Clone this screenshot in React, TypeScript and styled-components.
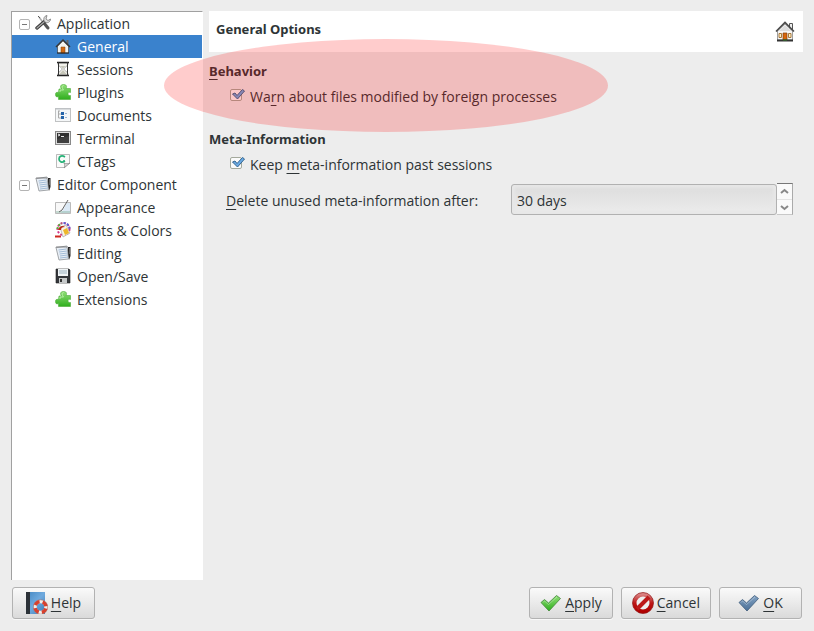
import React, { useState } from "react";
import styled, { createGlobalStyle } from "styled-components";

const GlobalStyle = createGlobalStyle`
  * { box-sizing: border-box; }
  body {
    margin: 0;
    background: #ededed;
    color: #2e3436;
    font-family: "Open Sans", "Noto Sans", sans-serif;
    font-size: 14px;
    line-height: 20px;
  }
  button, input { font: inherit; color: inherit; }
`;

const Dialog = styled.main`
  position: relative;
  display: flex;
  flex-direction: column;
  gap: 7px;
  min-height: 100vh;
  padding: 11px 11px 12px;
`;

const Content = styled.div`
  flex: 1;
  display: flex;
  gap: 6px;
`;

const Tree = styled.nav`
  flex: 0 0 192px;
  background: #fff;
  border: 1px solid #a0a0a0;
  border-right: 1px solid #fff;
  border-bottom: 0;
`;

const TreeRow = styled.button<{ $child?: boolean; $selected?: boolean }>`
  display: flex;
  align-items: center;
  width: 100%;
  height: 23px;
  padding: 1px 0 0 ${(p) => (p.$child ? 43 : 7)}px;
  border: 0;
  text-align: left;
  white-space: nowrap;
  background: ${(p) => (p.$selected ? "#3a82cd" : "transparent")};
  color: ${(p) => (p.$selected ? "#fff" : "#2e3436")};
`;

const Expander = styled.span`
  display: grid;
  place-items: center;
  width: 11px;
  height: 11px;
  margin-right: 5px;
  border: 1px solid #b4b4b4;
  border-radius: 2px;
  &::after {
    content: "";
    width: 5px;
    height: 1px;
    background: #777;
  }
`;

const TreeIcon = styled.svg`
  flex: none;
  width: 16px;
  height: 16px;
  margin-right: 6px;
  margin-bottom: 2px;
`;

const Page = styled.section`
  flex: 1;
  min-width: 0;
`;

const PageHeader = styled.header`
  display: flex;
  align-items: center;
  justify-content: space-between;
  height: 41px;
  padding: 0 7px;
  background: #fff;
`;

const Title = styled.h1`
  margin: 0;
  padding-bottom: 6px;
  font-family: "Noto Sans", "Open Sans", sans-serif;
  font-size: 13px;
  font-weight: 700;
`;

const HeaderIcon = styled.svg`
  width: 22px;
  height: 22px;
`;

const Group = styled.section`
  padding-top: 9px;
  & + & { padding-top: 22px; }
`;

const GroupTitle = styled.h2`
  margin: 0 0 6px;
  font-family: "Noto Sans", "Open Sans", sans-serif;
  font-size: 13px;
  font-weight: 700;
`;

const Option = styled.label`
  display: flex;
  align-items: center;
  gap: 4px;
  padding-left: 21px;
`;

const CheckBox = styled.span`
  display: grid;
  width: 16px;
  height: 14px;
  margin-bottom: 4px;
  & > * { grid-area: 1 / 1; }
`;

const CheckInput = styled.input`
  appearance: none;
  width: 12px;
  height: 12px;
  margin: 1px 0 0;
  border: 1px solid #a4a99c;
  border-radius: 2px;
  background: #fafafa;
  &:not(:checked) + svg { visibility: hidden; }
`;

const Tick = styled.svg`
  z-index: 1;
  width: 16px;
  height: 14px;
  pointer-events: none;
`;

const Field = styled.div`
  display: grid;
  grid-template-columns: 285px 1fr;
  align-items: center;
  padding: 8px 10px 0 17px;
`;

const FieldLabel = styled.label`
  padding-top: 3px;
`;

const Spin = styled.div`
  display: flex;
  height: 32px;
`;

const SpinInput = styled.input`
  flex: 1;
  min-width: 0;
  height: 31px;
  margin-top: 1px;
  padding: 1px 5px 0;
  border: 1px solid #b1b1b1;
  border-radius: 3px;
  background: linear-gradient(#dcdcdc, #ececec);
  box-shadow: inset 0 0 3px 3px #e7e7e7;
  outline: 0;
`;

const SpinButtons = styled.div`
  display: grid;
  grid-template-rows: 1fr 1fr;
  width: 16px;
  background: #fafafa;
  border-top: 1px solid #777;
  border-right: 1px solid #aaa;
  border-bottom: 1px solid #c8c8c8;
`;

const SpinButton = styled.button`
  display: grid;
  place-items: center;
  padding: 0;
  border: 0;
  background: transparent;
  & + & { border-top: 1px solid #e4e4e4; }
`;

const Arrow = styled.svg`
  width: 9px;
  height: 7px;
`;

const Footer = styled.footer`
  display: flex;
  gap: 8px;
  padding: 0 1px;
`;

const Push = styled.button<{ $first?: boolean }>`
  display: flex;
  align-items: center;
  justify-content: center;
  gap: 3px;
  min-width: 83px;
  height: 32px;
  padding: 0 10px;
  margin-right: ${(p) => (p.$first ? "auto" : "0")};
  border: 1px solid #b2b2b2;
  border-radius: 3px;
  background: linear-gradient(#fafafa, #dadada);
  box-shadow: 0 1px 0 #f8f8f8;
`;

const PushIcon = styled.svg`
  flex: none;
  width: 22px;
  height: 22px;
`;

const Mnemonic = styled.span`
  text-decoration: underline;
  text-decoration-thickness: 1px;
  text-decoration-skip-ink: none;
  text-underline-offset: 3px;
`;

const Highlight = styled.div`
  position: absolute;
  left: 164px;
  top: 39px;
  width: 444px;
  height: 93px;
  border-radius: 50%;
  background: rgba(255, 0, 0, 0.2);
  pointer-events: none;
  z-index: 2;
`;

const drawings: Record<string, React.ReactNode> = {
  tools: (
    <>
      <path d="M4 2 12 13" stroke="#aaa" strokeWidth="1.5" />
      <path d="M3 1 5 3" stroke="#555" />
      <path d="M9 8 13 13" stroke="#555" strokeWidth="3" strokeLinecap="round" />
      <path d="M2 13 10 6" stroke="#3a3a3a" strokeWidth="3.4" strokeLinecap="round" />
      <path d="M2 13 9 7" stroke="#aaa" strokeWidth="1.2" strokeLinecap="round" />
      <path d="M12 .5C9 1 8 4 9.500 6.500 12 9 15.500 7 15.500 4L13 5.500 11 4z" fill="#ddd" stroke="#777" strokeWidth=".8" />
    </>
  ),
  home: (
    <>
      <path d="M11.500 2h2v4h-2z" fill="#666" />
      <path d="M2.500 8 8 2.500l5.500 5.500v7h-11z" fill="#f4f4f0" stroke="#333" strokeWidth=".6" />
      <path d="M1 9 8 2 15 9" fill="none" stroke="#373737" strokeWidth="1.500" />
      <path d="M6 9h4v6H6z" fill="#d16a15" stroke="#82400b" strokeWidth=".5" />
      <path d="M2 15h12" stroke="#222" />
    </>
  ),
  hourglass: (
    <>
      <path d="M3 2h10c0 4-4 4-4 6s4 2 4 6H3c0-4 4-4 4-6S3 6 3 2z" fill="#f1f1eb" stroke="#888" strokeWidth=".7" />
      <path d="M2 1.500h12M2 14.500h12" stroke="#222" strokeWidth="1.400" />
      <path d="M3.500 1v14M12.500 1v14" stroke="#333" />
      <path d="M5.500 5h5L8 7.500zM8 9l3.500 4h-7z" fill="#c5c5b8" />
    </>
  ),
  puzzle: (
    <>
      <path
        d="M4 5H6.500C4.500 2 6 .5 8.500 .5S12.500 2 11 4.500H15.500V8.500C14 8 13 8.500 13 10S14 11.500 15.500 11.500V15.500H3.500V12.500C1.500 13.500 .5 12.500 .5 10.500S1.500 8 3.500 8.500z"
        fill="url(#green)"
        stroke="#4bab38"
        strokeWidth=".6"
      />
      <path d="M5 8V6h3.500C7 4 6.500 2 8.500 1.500" stroke="#c7f5b6" strokeWidth=".8" />
    </>
  ),
  documents: (
    <>
      <rect x=".5" y="1.5" width="15" height="13" fill="#f5f7f8" stroke="#c0c2c3" />
      <path d="M1 2h14" stroke="#bdc1c4" />
      <path d="M3 4h2M3.500 4v7H6M4 7h2" stroke="#aaa" fill="none" />
      <path d="M6 5h3v3H6zM6 9h3v3H6z" fill="#2564a9" />
      <path d="M10 6.500h2M10 10.500h2" stroke="#9bb6d2" />
    </>
  ),
  terminal: (
    <>
      <rect x=".5" y="1.5" width="15" height="13" fill="#ddd" stroke="#898989" />
      <rect x="2" y="3" width="12" height="10" fill="#303030" />
      <path d="m3 4 2 1-2 1M6 6.500h3" fill="none" stroke="#fff" strokeWidth=".9" />
      <path d="M2 9 14 6v7H2z" fill="#505050" opacity=".5" />
    </>
  ),
  ctags: (
    <>
      <path d="M1.500 1.500h13v8l-5 5h-8z" fill="#fafafa" stroke="#aaa" strokeWidth=".8" />
      <path d="M9 15c1-1 1-3 0-5 2 1 4 1 6 0z" fill="#ddd" stroke="#888" strokeWidth=".8" />
      <path d="M10 4C7 2 4 3 4 6s3 4 6 2" fill="none" stroke="#26b177" strokeWidth="1.700" />
      <path d="M9 7v2" stroke="#26b177" strokeWidth="1.500" />
    </>
  ),
  editor: (
    <>
      <path d="m13 2h2.500v9l-1.500 4-1-4z" fill="#282828" />
      <path d="M1 2.500 12 1l1.500 13L4 15z" fill="#e9eff6" stroke="#8d9194" strokeWidth=".8" />
      <path d="m3.500 5 8-1M4 7l8-1M4.500 9l8-1M5 11l7.500-1M5 13l8-1" stroke="#8fadcd" strokeWidth=".8" />
      <path d="m1 2.500 1-1 1 1 1-1 1 1 1-1 1 1 1-1 1 1 1-1 1 1 1-1" stroke="#555" fill="none" strokeWidth=".7" />
      <path d="M14.500 3v6" stroke="#999" strokeWidth=".5" />
    </>
  ),
  appearance: (
    <>
      <path d="M.5 3.500h15v11H.5z" fill="#f8f8f8" stroke="#aaa" strokeWidth=".8" />
      <path d="M12 4h3v10H6z" fill="#dce9f5" />
      <path d="M1 13h14" stroke="#8fb8a8" />
      <path d="m4 13 3-2 6-10" fill="none" stroke="#666" />
    </>
  ),
  colors: (
    <>
      <circle cx="8.500" cy="7" r="6" stroke="#d1358b" strokeWidth="2" strokeDasharray="2 1.500" />
      <path d="M8.500 1A6 6 0 0 1 14.500 8" stroke="#5667d5" strokeWidth="2" strokeDasharray="2 1.500" />
      <path d="M2.500 7a6 6 0 0 1 4.500-5.500" stroke="#55b83c" strokeWidth="2" strokeDasharray="2 1.500" />
      <path d="m5 5 6-2 4 8-7 4z" fill="#f7f3e6" stroke="#999" strokeWidth=".6" />
      <path d="M3 8c1-4 5-5 7-3-3 0-4 1-4 3z" fill="#b62a18" />
      <path d="m8 8 4-2 2 5-4 2z" fill="#edb72b" />
      <path d="M0 14.500h6" stroke="#ce281f" strokeWidth="2" />
    </>
  ),
  save: (
    <>
      <path d="M1 1h13l1 1v13H1z" fill="#34373b" stroke="#222" strokeWidth=".6" />
      <path d="M3 1h10v7H3z" fill="#f0f4f6" />
      <path d="M4 3h8M4 5h8" stroke="#9ab1bf" />
      <path d="M4 10h8v5H4z" fill="#c6c9ca" />
      <path d="M5 11h2v3H5z" fill="#333" />
    </>
  ),
};

type Item = { label: string; icon: string; child?: boolean };

const items: Item[] = [
  { label: "Application", icon: "tools" },
  { label: "General", icon: "home", child: true },
  { label: "Sessions", icon: "hourglass", child: true },
  { label: "Plugins", icon: "puzzle", child: true },
  { label: "Documents", icon: "documents", child: true },
  { label: "Terminal", icon: "terminal", child: true },
  { label: "CTags", icon: "ctags", child: true },
  { label: "Editor Component", icon: "editor" },
  { label: "Appearance", icon: "appearance", child: true },
  { label: "Fonts & Colors", icon: "colors", child: true },
  { label: "Editing", icon: "editor", child: true },
  { label: "Open/Save", icon: "save", child: true },
  { label: "Extensions", icon: "puzzle", child: true },
];

const Definitions = styled.svg`
  position: absolute;
  width: 0;
  height: 0;
`;

function Gradients() {
  return (
    <Definitions aria-hidden="true">
      <defs>
        <linearGradient id="green" x2="0" y2="1">
          <stop stopColor="#91df78" />
          <stop offset="1" stopColor="#2fae1d" />
        </linearGradient>
        <linearGradient id="steel" x2="0" y2="1">
          <stop stopColor="#83a3c4" />
          <stop offset="1" stopColor="#4b6f96" />
        </linearGradient>
        <linearGradient id="red" x2="0" y2="1">
          <stop stopColor="#d98080" />
          <stop offset=".5" stopColor="#bd1717" />
          <stop offset="1" stopColor="#b00000" />
        </linearGradient>
        <linearGradient id="book" x2="1" y2="1">
          <stop stopColor="#4387c2" />
          <stop offset=".5" stopColor="#70aade" />
          <stop offset="1" stopColor="#3979b5" />
        </linearGradient>
      </defs>
    </Definitions>
  );
}

function BigTick({ fill, edge }: { fill: string; edge: string }) {
  return (
    <PushIcon viewBox="0 0 22 22" aria-hidden="true">
      <path
        d="M1 10.500 4.500 7.500 8.500 11 16.500 3.500 20.500 6.500 9 19z"
        fill={`url(#${fill})`}
        stroke={edge}
        strokeWidth=".8"
        strokeLinejoin="round"
      />
      <path d="M3 10.500 4.500 9 8.500 12.500 17 5" fill="none" stroke="#fff" strokeOpacity=".3" />
    </PushIcon>
  );
}

function CheckOption({ id, children }: { id: string; children: React.ReactNode }) {
  return (
    <Option htmlFor={id}>
      <CheckBox>
        <CheckInput id={id} type="checkbox" defaultChecked />
        <Tick viewBox="0 0 16 14" aria-hidden="true">
          <path d="M2.500 6 5 5 7 7.500 12.500 1.500 14.500 3 7.500 11z" fill="#6aaae4" stroke="#35658f" strokeLinejoin="round" />
        </Tick>
      </CheckBox>
      <span>{children}</span>
    </Option>
  );
}

export default function App() {
  const [selected, setSelected] = useState("General");
  const [days, setDays] = useState(30);

  return (
    <Dialog>
      <GlobalStyle />
      <Gradients />
      <Content>
        <Tree aria-label="Options">
          {items.map((item) => (
            <TreeRow
              key={item.label}
              type="button"
              $child={item.child}
              $selected={selected === item.label}
              onClick={() => setSelected(item.label)}
            >
              {!item.child && <Expander />}
              <TreeIcon viewBox="0 0 16 16" fill="none" aria-hidden="true">
                {drawings[item.icon]}
              </TreeIcon>
              {item.label}
            </TreeRow>
          ))}
        </Tree>
        <Page>
          <PageHeader>
            <Title>General Options</Title>
            <HeaderIcon viewBox="0 0 22 22" aria-hidden="true">
              <path d="M15.500 2.500h3v6h-3z" fill="#eee" stroke="#555" />
              <path d="M3.500 10 11 3l7.500 7v9h-15z" fill="#f6f6f6" stroke="#888" strokeWidth=".8" />
              <path d="M5 10 11 4l6 6z" fill="#dcdcdc" />
              <path d="M2 10.500 11 1.500l9 9" fill="none" stroke="#484848" strokeWidth="1.600" />
              <path d="M9 12h4v7H9z" fill="#d8660b" stroke="#82400b" strokeWidth=".7" />
              <path d="M5 12.500h2.500v4H5zM14.500 12.500H17v4h-2.500z" fill="#fff0c3" stroke="#a8793b" />
              <path d="M3 19.500h16" stroke="#333" strokeWidth="2" />
              <path d="M9 19h4" stroke="#347c28" />
            </HeaderIcon>
          </PageHeader>
          <Group>
            <GroupTitle><Mnemonic>B</Mnemonic>ehavior</GroupTitle>
            <CheckOption id="warn">Wa<Mnemonic>r</Mnemonic>n about files modified by foreign processes</CheckOption>
          </Group>
          <Group>
            <GroupTitle>Meta-Information</GroupTitle>
            <CheckOption id="keep">Keep <Mnemonic>m</Mnemonic>eta-information past sessions</CheckOption>
            <Field>
              <FieldLabel htmlFor="days"><Mnemonic>D</Mnemonic>elete unused meta-information after:</FieldLabel>
              <Spin>
                <SpinInput id="days" value={`${days} days`} readOnly />
                <SpinButtons>
                  <SpinButton type="button" aria-label="Increase" onClick={() => setDays(days + 1)}>
                    <Arrow viewBox="0 0 9 7"><path d="m1 5 3.500-3L8 5" fill="none" stroke="#888" strokeWidth="2" /></Arrow>
                  </SpinButton>
                  <SpinButton type="button" aria-label="Decrease" onClick={() => setDays(Math.max(0, days - 1))}>
                    <Arrow viewBox="0 0 9 7"><path d="m1 2 3.500 3L8 2" fill="none" stroke="#888" strokeWidth="2" /></Arrow>
                  </SpinButton>
                </SpinButtons>
              </Spin>
            </Field>
          </Group>
        </Page>
      </Content>
      <Footer>
        <Push type="button" $first>
          <PushIcon viewBox="0 0 22 22" aria-hidden="true">
            <path d="M0 0h19v22H0z" fill="url(#book)" />
            <path d="M0 0h4v22H0z" fill="#2c3238" />
            <circle cx="14.500" cy="15" r="5.500" fill="none" stroke="#f2eee9" strokeWidth="3.400" />
            <circle cx="14.500" cy="15" r="5.500" fill="none" stroke="#d8402d" strokeWidth="3.400" strokeDasharray="5.400 3.240" strokeDashoffset="-1.600" />
            <circle cx="14.500" cy="15" r="7.200" fill="none" stroke="#a55045" strokeWidth=".5" />
          </PushIcon>
          <span><Mnemonic>H</Mnemonic>elp</span>
        </Push>
        <Push type="button">
          <BigTick fill="green" edge="#43863a" />
          <span><Mnemonic>A</Mnemonic>pply</span>
        </Push>
        <Push type="button">
          <PushIcon viewBox="0 0 22 22" aria-hidden="true">
            <circle cx="11" cy="11" r="8.500" fill="#eee" stroke="url(#red)" strokeWidth="4" />
            <path d="m5 17 12-12" stroke="#bc1919" strokeWidth="4" />
            <circle cx="11" cy="11" r="10.500" fill="none" stroke="#8e1515" strokeWidth=".7" />
          </PushIcon>
          <span><Mnemonic>C</Mnemonic>ancel</span>
        </Push>
        <Push type="button">
          <BigTick fill="steel" edge="#3f5c7b" />
          <span><Mnemonic>O</Mnemonic>K</span>
        </Push>
      </Footer>
      <Highlight />
    </Dialog>
  );
}
